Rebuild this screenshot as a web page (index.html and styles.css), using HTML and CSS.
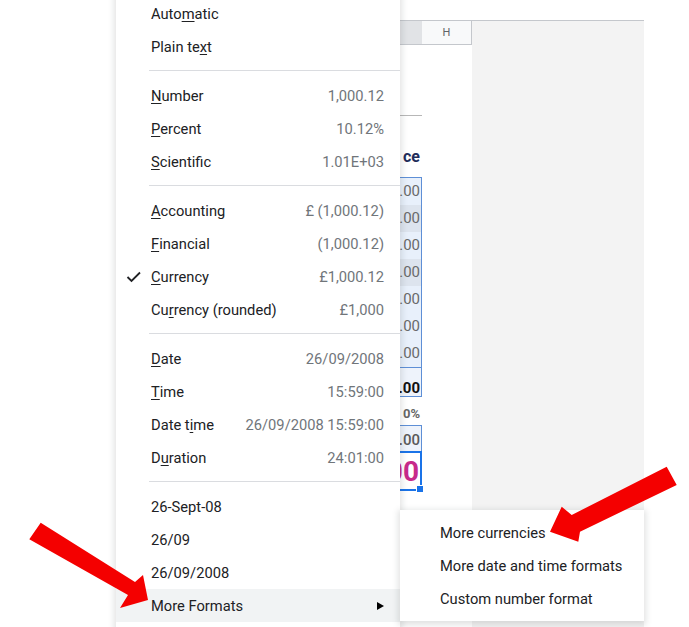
FILE: index.html
```html
<!DOCTYPE html>
<html lang="en">
<head>
  <meta charset="UTF-8" />
  <meta name="viewport" content="width=device-width, initial-scale=1.0"/>
  <title>Format menu</title>
  <link rel="stylesheet" href="styles.css">
</head>
<body>

  <!-- Sheet behind the menu -->
  <div class="sheet">
    <div class="col col-g">
      <div class="col-head"></div>
      <div class="g-spacer"></div>
      <div class="g-title">ce</div>
      <div class="g-box">
        <div class="g-row">.00</div>
        <div class="g-row alt">.00</div>
        <div class="g-row">.00</div>
        <div class="g-row alt">.00</div>
        <div class="g-row">.00</div>
        <div class="g-row">.00</div>
        <div class="g-row">.00</div>
        <div class="g-total">.00</div>
      </div>
      <div class="g-pct">0%</div>
      <div class="g-sub">.00</div>
      <div class="g-sel">00<span class="handle"></span></div>
    </div>
    <div class="col col-h">
      <div class="col-head">H</div>
    </div>
    <div class="gray-area"></div>
  </div>

  <!-- Format menu -->
  <div class="menu">
    <div class="item"><span class="icon"></span>Auto<u>m</u>atic</div>
    <div class="item"><span class="icon"></span>Plain te<u>x</u>t</div>
    <div class="sep"></div>
    <div class="item"><span class="icon"></span><u>N</u>umber<span class="val">1,000.12</span></div>
    <div class="item"><span class="icon"></span><u>P</u>ercent<span class="val">10.12%</span></div>
    <div class="item"><span class="icon"></span><u>S</u>cientific<span class="val">1.01E+03</span></div>
    <div class="sep"></div>
    <div class="item"><span class="icon"></span><u>A</u>ccounting<span class="val">£ (1,000.12)</span></div>
    <div class="item"><span class="icon"></span><u>F</u>inancial<span class="val">(1,000.12)</span></div>
    <div class="item">
      <span class="icon">
        <svg width="16" height="14" viewBox="0 0 16 14"><polyline points="1.5,7 5.5,11 14,2.5" fill="none" stroke="#202124" stroke-width="1.8"/></svg>
      </span><u>C</u>urrency<span class="val">£1,000.12</span>
    </div>
    <div class="item"><span class="icon"></span>Cu<u>r</u>rency (rounded)<span class="val">£1,000</span></div>
    <div class="sep"></div>
    <div class="item"><span class="icon"></span><u>D</u>ate<span class="val">26/09/2008</span></div>
    <div class="item"><span class="icon"></span><u>T</u>ime<span class="val">15:59:00</span></div>
    <div class="item"><span class="icon"></span>Date t<u>i</u>me<span class="val">26/09/2008 15:59:00</span></div>
    <div class="item"><span class="icon"></span>D<u>u</u>ration<span class="val">24:01:00</span></div>
    <div class="sep"></div>
    <div class="item"><span class="icon"></span>26-Sept-08</div>
    <div class="item"><span class="icon"></span>26/09</div>
    <div class="item"><span class="icon"></span>26/09/2008</div>
    <div class="item active">
      <span class="icon"></span>More Formats
      <svg class="more" width="7" height="8" viewBox="0 0 7 8"><polygon points="0,0 7,4 0,8" fill="#000"/></svg>
    </div>
  </div>

  <!-- Sub menu -->
  <div class="submenu">
    <div class="sub-item">More currencies</div>
    <div class="sub-item">More date and time formats</div>
    <div class="sub-item">Custom number format</div>
  </div>

  <!-- Red arrows drawn over the screenshot -->
  <svg class="arrows" width="689" height="627" viewBox="0 0 689 627">
    <polygon points="40.7,522.7 135,582 143,575 148,600 120,608 128,595 29.3,539.3" fill="#f40000"/>
    <polygon points="666.7,466.7 571.7,515 561.7,506.7 550,531.7 578.3,541.7 580,531.7 676.7,485" fill="#f40000"/>
  </svg>

</body>
</html>
```

FILE: styles.css
```css
body {
  margin: 0;
  width: 689px;
  height: 627px;
  overflow: hidden;
  position: relative;
  background-color: #fff;
  font-family: Roboto, "Liberation Sans", Arial, sans-serif;
  color: #202124;
}

/* sheet */
.sheet {
  display: flex;
  margin: 20px 0 0 352px;
  width: 292px;
  height: 607px;
  border-top: 1px solid #c4c7cc;
}

.col-g {
  width: 70px;
}

.col-h {
  width: 50px;
}

.gray-area {
  flex: 1;
  background-color: #f3f3f3;
}

.col-head {
  height: 23px;
  border-bottom: 1px solid #c4c7cc;
  display: flex;
  align-items: center;
  justify-content: center;
  font-size: 11px;
  color: #5f6368;
}

.col-g .col-head {
  background-color: #e1e3e6;
}

.col-h .col-head {
  background-color: #f8f9fa;
  border-right: 1px solid #c4c7cc;
}

.g-spacer {
  height: 70px;
  border-bottom: 1px solid #b7b7b7;
}

.g-title {
  height: 61px;
  box-sizing: border-box;
  padding: 31px 2px 0 0;
  text-align: right;
  font-size: 16px;
  line-height: 20px;
  font-weight: bold;
  color: #1f2d5a;
}

.g-box {
  border: 1px solid #5e8fd6;
}

.g-row {
  height: 27px;
  line-height: 27px;
  padding-right: 1px;
  text-align: right;
  font-size: 15px;
  color: #6a6a6a;
  background-color: #e8f0fb;
}

.g-row.alt {
  background-color: #dde4ee;
}

.g-total {
  height: 29px;
  box-sizing: border-box;
  padding: 11px 1px 0 0;
  line-height: 18px;
  border-top: 1px solid #5e8fd6;
  text-align: right;
  font-size: 15px;
  font-weight: bold;
  color: #111;
  background-color: #eef3fb;
}

.g-pct {
  height: 28px;
  box-sizing: border-box;
  padding: 8px 2px 0 0;
  line-height: 18px;
  text-align: right;
  font-size: 13px;
  font-weight: bold;
  color: #666;
}

.g-sub {
  height: 26px;
  box-sizing: border-box;
  border: 1px solid #5e8fd6;
  border-bottom: none;
  padding-right: 1px;
  line-height: 28px;
  text-align: right;
  font-size: 15px;
  font-weight: 500;
  color: #5a5a5a;
  background-color: #eef3fb;
}

.g-sel {
  position: relative;
  height: 40px;
  box-sizing: border-box;
  border: 2px solid #1a73e8;
  border-left: none;
  padding-right: 1px;
  line-height: 38px;
  text-align: right;
  font-size: 28px;
  font-weight: bold;
  color: #c72a8a;
}

.handle {
  position: absolute;
  right: -4px;
  bottom: -4px;
  width: 6px;
  height: 6px;
  background-color: #1a73e8;
  border: 1px solid #fff;
}

/* menu */
.menu {
  position: absolute;
  left: 116px;
  top: -9px;
  width: 284px;
  padding: 6px 0;
  background-color: #fff;
  box-shadow: 0 2px 6px 2px rgba(60, 64, 67, 0.15);
  z-index: 2;
}

.item {
  height: 33px;
  display: flex;
  align-items: center;
  padding: 0 16px 0 10px;
  font-size: 14.7px;
  color: #202124;
  white-space: nowrap;
}

.item u {
  text-underline-offset: 2px;
}

.item.active {
  background-color: #f1f3f4;
}

.icon {
  width: 25px;
  flex-shrink: 0;
  display: flex;
  align-items: center;
}

.val {
  margin-left: auto;
  color: #70757a;
}

.more {
  margin-left: auto;
}

.sep {
  height: 1px;
  margin: 7px 0 8px 33px;
  background-color: #dadce0;
}

.submenu {
  position: absolute;
  left: 400px;
  top: 510px;
  width: 244px;
  padding: 6px 0;
  background-color: #fff;
  box-shadow: 0 2px 6px 2px rgba(60, 64, 67, 0.15);
  z-index: 3;
}

.sub-item {
  height: 33px;
  display: flex;
  align-items: center;
  padding-left: 40px;
  font-size: 14.7px;
  color: #202124;
}

.arrows {
  position: absolute;
  left: 0;
  top: 0;
  z-index: 4;
  pointer-events: none;
}
```
